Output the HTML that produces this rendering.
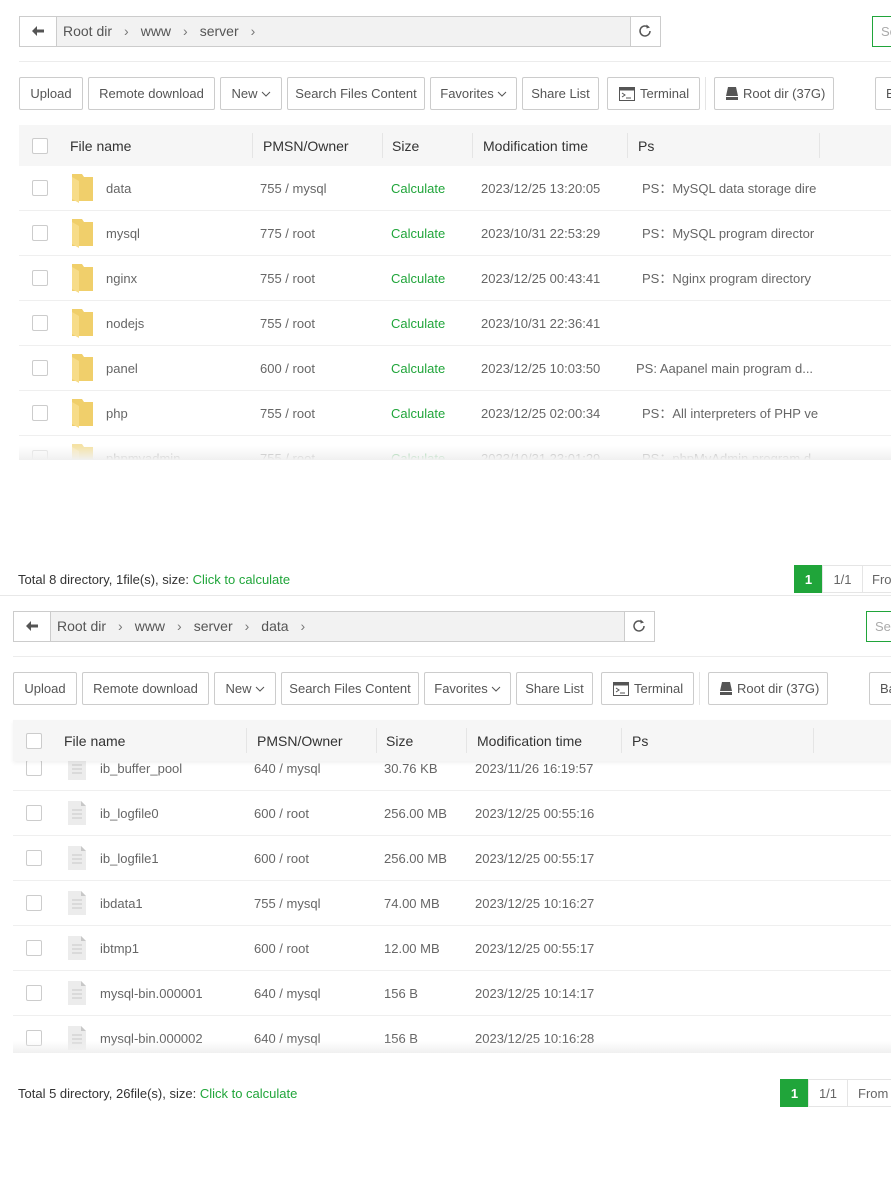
<!DOCTYPE html>
<html><head><meta charset="utf-8">
<style>
*{box-sizing:border-box;margin:0;padding:0}
body{width:891px;height:1131px;overflow:hidden;background:#fff;font-family:"Liberation Sans","Noto Sans CJK SC",sans-serif;color:#333;position:relative}
.p{position:absolute;left:0;width:900px;height:595px}
.a{position:absolute}
.bc{position:absolute;top:16px;height:31px;border:1px solid #ccc;background:#f2f2f2}
.btn{position:absolute;top:77px;height:33px;border:1px solid #ccc;border-radius:2px;background:#fff;font-size:13px;color:#555;line-height:31px;text-align:center;white-space:nowrap}
.hdr{position:absolute;top:125px;height:41px;background:#f6f6f6;font-size:14px;color:#333;line-height:43px}
.cb{position:absolute;width:16px;height:16px;border:1px solid #ccc;border-radius:2px;background:#fff}
.row{position:absolute;left:0;width:900px;height:45px;border-bottom:1px solid #efefef;font-size:13px;color:#666;line-height:45px;white-space:nowrap}
.row span{position:absolute}
.g{color:#20a53a}
.vd{position:absolute;top:8px;width:1px;height:25px;background:#e5e5e5}
.foot{position:absolute;font-size:13px;color:#333}
.pg{position:absolute;height:28px;font-size:13px;line-height:28px;text-align:center;border:1px solid #e5e5e5;color:#666;background:#fff}
.cv{vertical-align:1px;margin-left:3px}
</style></head><body>

<!-- PANEL 1 -->
<div class="p" style="top:0;left:0">
  <div class="bc" style="left:19px;width:642px"></div>
  <div class="a" style="left:19px;top:16px;width:38px;height:31px;border:1px solid #ccc;background:#fff"></div>
  <svg class="a" style="left:31px;top:25px" width="14" height="12" viewBox="0 0 14 12"><path d="M6 1 1 6l5 5V7.5h7v-3H6z" fill="#555"/></svg>
  <div class="a" style="left:63px;top:16px;line-height:31px;font-size:14px;color:#555">Root dir<span style="padding:0 12px;color:#777">›</span>www<span style="padding:0 12px;color:#777">›</span>server<span style="padding:0 12px;color:#777">›</span></div>
  <div class="a" style="left:630px;top:16px;width:31px;height:31px;border:1px solid #ccc;background:#fff"></div>
  <svg class="a" style="left:637px;top:23px" width="16" height="16" viewBox="0 0 16 16"><path d="M13 8a5 5 0 1 1-1.6-3.7" fill="none" stroke="#555" stroke-width="1.5"/><path d="M9.5 1.5 13 4.5 9.5 5.5z" fill="#555"/></svg>
  <div class="a" style="left:872px;top:16px;width:30px;height:31px;border:1px solid #20a53a;font-size:13px;color:#aaa;line-height:29px;padding-left:8px">Se</div>
  <div class="a" style="left:19px;top:61px;width:880px;height:1px;background:#ececec"></div>

  <div class="btn" style="left:19px;width:64px">Upload</div>
  <div class="btn" style="left:88px;width:127px">Remote download</div>
  <div class="btn" style="left:220px;width:62px">New<svg class="cv" width="10" height="6" viewBox="0 0 10 6"><path d="M1 1l4 4 4-4" fill="none" stroke="#555"/></svg></div>
  <div class="btn" style="left:287px;width:138px">Search Files Content</div>
  <div class="btn" style="left:430px;width:87px">Favorites<svg class="cv" width="10" height="6" viewBox="0 0 10 6"><path d="M1 1l4 4 4-4" fill="none" stroke="#555"/></svg></div>
  <div class="btn" style="left:522px;width:77px">Share List</div>
  <div class="btn" style="left:607px;width:93px;text-align:left;padding-left:11px"><svg style="vertical-align:-3px;margin-right:5px" width="16" height="14" viewBox="0 0 16 14"><rect x=".5" y=".5" width="15" height="13" fill="#fff" stroke="#555"/><rect x=".5" y=".5" width="15" height="3" fill="#555"/><path d="M3 6l3 2-3 2M7 11h5" fill="none" stroke="#555"/></svg>Terminal</div>
  <div class="a" style="left:705px;top:77px;width:1px;height:33px;background:#e5e5e5"></div>
  <div class="btn" style="left:714px;width:120px;text-align:left;padding-left:11px"><svg style="vertical-align:-2px;margin-right:5px" width="12" height="13" viewBox="0 0 12 13"><path d="M2 0h8l2 9H0z" fill="#555"/><rect x="0" y="10" width="12" height="3" fill="#555"/></svg>Root dir (37G)</div>
  <div class="btn" style="left:875px;width:30px;text-align:left;padding-left:10px">B</div>

  <div class="hdr" style="left:19px;width:880px">
    <div class="cb" style="left:13px;top:13px"></div>
    <span class="a" style="left:51px">File name</span>
    <div class="vd" style="left:233px"></div><span class="a" style="left:244px">PMSN/Owner</span>
    <div class="vd" style="left:363px"></div><span class="a" style="left:373px">Size</span>
    <div class="vd" style="left:453px"></div><span class="a" style="left:464px">Modification time</span>
    <div class="vd" style="left:608px"></div><span class="a" style="left:619px">Ps</span>
    <div class="vd" style="left:800px"></div>
  </div>

  <div class="a" style="left:19px;top:166px;width:880px;height:294px;overflow:hidden">
    <div class="row" style="top:0"><div class="cb" style="left:13px;top:14px"></div><svg class="a" style="left:53px;top:8px" width="21" height="29" viewBox="0 0 21 29"><path d="M0 0h10l2 3h9v24H0z" fill="#f0cf6b"/><path d="M0 3l7 4v22l-7-4z" fill="#f7dc88"/></svg><span style="left:87px">data</span><span style="left:241px">755 / mysql</span><span class="g" style="left:372px">Calculate</span><span style="left:462px">2023/12/25 13:20:05</span><span style="left:623px">PS：MySQL data storage dire</span></div>
    <div class="row" style="top:45px"><div class="cb" style="left:13px;top:14px"></div><svg class="a" style="left:53px;top:8px" width="21" height="29" viewBox="0 0 21 29"><path d="M0 0h10l2 3h9v24H0z" fill="#f0cf6b"/><path d="M0 3l7 4v22l-7-4z" fill="#f7dc88"/></svg><span style="left:87px">mysql</span><span style="left:241px">775 / root</span><span class="g" style="left:372px">Calculate</span><span style="left:462px">2023/10/31 22:53:29</span><span style="left:623px">PS：MySQL program director</span></div>
    <div class="row" style="top:90px"><div class="cb" style="left:13px;top:14px"></div><svg class="a" style="left:53px;top:8px" width="21" height="29" viewBox="0 0 21 29"><path d="M0 0h10l2 3h9v24H0z" fill="#f0cf6b"/><path d="M0 3l7 4v22l-7-4z" fill="#f7dc88"/></svg><span style="left:87px">nginx</span><span style="left:241px">755 / root</span><span class="g" style="left:372px">Calculate</span><span style="left:462px">2023/12/25 00:43:41</span><span style="left:623px">PS：Nginx program directory</span></div>
    <div class="row" style="top:135px"><div class="cb" style="left:13px;top:14px"></div><svg class="a" style="left:53px;top:8px" width="21" height="29" viewBox="0 0 21 29"><path d="M0 0h10l2 3h9v24H0z" fill="#f0cf6b"/><path d="M0 3l7 4v22l-7-4z" fill="#f7dc88"/></svg><span style="left:87px">nodejs</span><span style="left:241px">755 / root</span><span class="g" style="left:372px">Calculate</span><span style="left:462px">2023/10/31 22:36:41</span></div>
    <div class="row" style="top:180px"><div class="cb" style="left:13px;top:14px"></div><svg class="a" style="left:53px;top:8px" width="21" height="29" viewBox="0 0 21 29"><path d="M0 0h10l2 3h9v24H0z" fill="#f0cf6b"/><path d="M0 3l7 4v22l-7-4z" fill="#f7dc88"/></svg><span style="left:87px">panel</span><span style="left:241px">600 / root</span><span class="g" style="left:372px">Calculate</span><span style="left:462px">2023/12/25 10:03:50</span><span style="left:617px">PS: Aapanel main program d...</span></div>
    <div class="row" style="top:225px"><div class="cb" style="left:13px;top:14px"></div><svg class="a" style="left:53px;top:8px" width="21" height="29" viewBox="0 0 21 29"><path d="M0 0h10l2 3h9v24H0z" fill="#f0cf6b"/><path d="M0 3l7 4v22l-7-4z" fill="#f7dc88"/></svg><span style="left:87px">php</span><span style="left:241px">755 / root</span><span class="g" style="left:372px">Calculate</span><span style="left:462px">2023/12/25 02:00:34</span><span style="left:623px">PS：All interpreters of PHP ve</span></div>
    <div class="row" style="top:270px;opacity:.6"><div class="cb" style="left:13px;top:14px"></div><svg class="a" style="left:53px;top:8px" width="21" height="29" viewBox="0 0 21 29"><path d="M0 0h10l2 3h9v24H0z" fill="#f0cf6b"/><path d="M0 3l7 4v22l-7-4z" fill="#f7dc88"/></svg><span style="left:87px">phpmyadmin</span><span style="left:241px">755 / root</span><span class="g" style="left:372px">Calculate</span><span style="left:462px">2023/10/31 23:01:29</span><span style="left:623px">PS：phpMyAdmin program d</span></div>
    <div class="a" style="left:0;top:280px;width:880px;height:14px;background:linear-gradient(rgba(255,255,255,0),#f0f0f0)"></div>
  </div>

  <div class="foot" style="left:18px;top:572px">Total 8 directory, 1file(s), size: <span class="g">Click to calculate</span></div>
  <div class="pg" style="left:794px;top:565px;width:29px;background:#20a53a;border-color:#20a53a;color:#fff;font-weight:bold">1</div>
  <div class="pg" style="left:822px;top:565px;width:41px">1/1</div>
  <div class="pg" style="left:862px;top:565px;width:40px;text-align:left;padding-left:9px">From</div>
  <div class="a" style="left:0;top:595px;width:891px;height:1px;background:#e8e8e8"></div>
</div>

<!-- PANEL 2 -->
<div class="p" style="top:595px;left:-6px">
  <div class="bc" style="left:19px;width:642px"></div>
  <div class="a" style="left:19px;top:16px;width:38px;height:31px;border:1px solid #ccc;background:#fff"></div>
  <svg class="a" style="left:31px;top:25px" width="14" height="12" viewBox="0 0 14 12"><path d="M6 1 1 6l5 5V7.5h7v-3H6z" fill="#555"/></svg>
  <div class="a" style="left:63px;top:16px;line-height:31px;font-size:14px;color:#555">Root dir<span style="padding:0 12px;color:#777">›</span>www<span style="padding:0 12px;color:#777">›</span>server<span style="padding:0 12px;color:#777">›</span>data<span style="padding:0 12px;color:#777">›</span></div>
  <div class="a" style="left:630px;top:16px;width:31px;height:31px;border:1px solid #ccc;background:#fff"></div>
  <svg class="a" style="left:637px;top:23px" width="16" height="16" viewBox="0 0 16 16"><path d="M13 8a5 5 0 1 1-1.6-3.7" fill="none" stroke="#555" stroke-width="1.5"/><path d="M9.5 1.5 13 4.5 9.5 5.5z" fill="#555"/></svg>
  <div class="a" style="left:872px;top:16px;width:40px;height:31px;border:1px solid #20a53a;font-size:13px;color:#aaa;line-height:29px;padding-left:8px">Sea</div>
  <div class="a" style="left:19px;top:61px;width:890px;height:1px;background:#ececec"></div>

  <div class="btn" style="left:19px;width:64px">Upload</div>
  <div class="btn" style="left:88px;width:127px">Remote download</div>
  <div class="btn" style="left:220px;width:62px">New<svg class="cv" width="10" height="6" viewBox="0 0 10 6"><path d="M1 1l4 4 4-4" fill="none" stroke="#555"/></svg></div>
  <div class="btn" style="left:287px;width:138px">Search Files Content</div>
  <div class="btn" style="left:430px;width:87px">Favorites<svg class="cv" width="10" height="6" viewBox="0 0 10 6"><path d="M1 1l4 4 4-4" fill="none" stroke="#555"/></svg></div>
  <div class="btn" style="left:522px;width:77px">Share List</div>
  <div class="btn" style="left:607px;width:93px;text-align:left;padding-left:11px"><svg style="vertical-align:-3px;margin-right:5px" width="16" height="14" viewBox="0 0 16 14"><rect x=".5" y=".5" width="15" height="13" fill="#fff" stroke="#555"/><rect x=".5" y=".5" width="15" height="3" fill="#555"/><path d="M3 6l3 2-3 2M7 11h5" fill="none" stroke="#555"/></svg>Terminal</div>
  <div class="a" style="left:705px;top:77px;width:1px;height:33px;background:#e5e5e5"></div>
  <div class="btn" style="left:714px;width:120px;text-align:left;padding-left:11px"><svg style="vertical-align:-2px;margin-right:5px" width="12" height="13" viewBox="0 0 12 13"><path d="M2 0h8l2 9H0z" fill="#555"/><rect x="0" y="10" width="12" height="3" fill="#555"/></svg>Root dir (37G)</div>
  <div class="btn" style="left:875px;width:40px;text-align:left;padding-left:10px">Ba</div>

  <div class="a" style="left:19px;top:166px;width:890px;height:292px;overflow:hidden">
    <div class="row" style="top:-15px"><div class="cb" style="left:13px;top:14px"></div><svg class="a" style="left:55px;top:10px" width="18" height="24" viewBox="0 0 18 24"><path d="M0 0h13l5 5v19H0z" fill="#ececec"/><path d="M4 9h10M4 13h10M4 17h10" stroke="#d4d4d4" stroke-width="1.5"/></svg><span style="left:87px">ib_buffer_pool</span><span style="left:241px">640 / mysql</span><span style="left:371px">30.76 KB</span><span style="left:462px">2023/11/26 16:19:57</span></div>
    <div class="row" style="top:30px"><div class="cb" style="left:13px;top:14px"></div><svg class="a" style="left:55px;top:10px" width="18" height="24" viewBox="0 0 18 24"><path d="M0 0h13l5 5v19H0z" fill="#ececec"/><path d="M13 0v5h5z" fill="#c8c8c8"/><path d="M4 9h10M4 13h10M4 17h10" stroke="#d4d4d4" stroke-width="1.5"/></svg><span style="left:87px">ib_logfile0</span><span style="left:241px">600 / root</span><span style="left:371px">256.00 MB</span><span style="left:462px">2023/12/25 00:55:16</span></div>
    <div class="row" style="top:75px"><div class="cb" style="left:13px;top:14px"></div><svg class="a" style="left:55px;top:10px" width="18" height="24" viewBox="0 0 18 24"><path d="M0 0h13l5 5v19H0z" fill="#ececec"/><path d="M13 0v5h5z" fill="#c8c8c8"/><path d="M4 9h10M4 13h10M4 17h10" stroke="#d4d4d4" stroke-width="1.5"/></svg><span style="left:87px">ib_logfile1</span><span style="left:241px">600 / root</span><span style="left:371px">256.00 MB</span><span style="left:462px">2023/12/25 00:55:17</span></div>
    <div class="row" style="top:120px"><div class="cb" style="left:13px;top:14px"></div><svg class="a" style="left:55px;top:10px" width="18" height="24" viewBox="0 0 18 24"><path d="M0 0h13l5 5v19H0z" fill="#ececec"/><path d="M13 0v5h5z" fill="#c8c8c8"/><path d="M4 9h10M4 13h10M4 17h10" stroke="#d4d4d4" stroke-width="1.5"/></svg><span style="left:87px">ibdata1</span><span style="left:241px">755 / mysql</span><span style="left:371px">74.00 MB</span><span style="left:462px">2023/12/25 10:16:27</span></div>
    <div class="row" style="top:165px"><div class="cb" style="left:13px;top:14px"></div><svg class="a" style="left:55px;top:10px" width="18" height="24" viewBox="0 0 18 24"><path d="M0 0h13l5 5v19H0z" fill="#ececec"/><path d="M13 0v5h5z" fill="#c8c8c8"/><path d="M4 9h10M4 13h10M4 17h10" stroke="#d4d4d4" stroke-width="1.5"/></svg><span style="left:87px">ibtmp1</span><span style="left:241px">600 / root</span><span style="left:371px">12.00 MB</span><span style="left:462px">2023/12/25 00:55:17</span></div>
    <div class="row" style="top:210px"><div class="cb" style="left:13px;top:14px"></div><svg class="a" style="left:55px;top:10px" width="18" height="24" viewBox="0 0 18 24"><path d="M0 0h13l5 5v19H0z" fill="#ececec"/><path d="M13 0v5h5z" fill="#c8c8c8"/><path d="M4 9h10M4 13h10M4 17h10" stroke="#d4d4d4" stroke-width="1.5"/></svg><span style="left:87px">mysql-bin.000001</span><span style="left:241px">640 / mysql</span><span style="left:371px">156 B</span><span style="left:462px">2023/12/25 10:14:17</span></div>
    <div class="row" style="top:255px"><div class="cb" style="left:13px;top:14px"></div><svg class="a" style="left:55px;top:10px" width="18" height="24" viewBox="0 0 18 24"><path d="M0 0h13l5 5v19H0z" fill="#ececec"/><path d="M13 0v5h5z" fill="#c8c8c8"/><path d="M4 9h10M4 13h10M4 17h10" stroke="#d4d4d4" stroke-width="1.5"/></svg><span style="left:87px">mysql-bin.000002</span><span style="left:241px">640 / mysql</span><span style="left:371px">156 B</span><span style="left:462px">2023/12/25 10:16:28</span></div>
    <div class="a" style="left:0;top:280px;width:890px;height:12px;background:linear-gradient(rgba(255,255,255,0),#f0f0f0)"></div>
  </div>

  <div class="hdr" style="left:19px;width:890px;box-shadow:0 2px 4px rgba(0,0,0,.06)">
    <div class="cb" style="left:13px;top:13px"></div>
    <span class="a" style="left:51px">File name</span>
    <div class="vd" style="left:233px"></div><span class="a" style="left:244px">PMSN/Owner</span>
    <div class="vd" style="left:363px"></div><span class="a" style="left:373px">Size</span>
    <div class="vd" style="left:453px"></div><span class="a" style="left:464px">Modification time</span>
    <div class="vd" style="left:608px"></div><span class="a" style="left:619px">Ps</span>
    <div class="vd" style="left:800px"></div>
  </div>

  <div class="foot" style="left:24px;top:491px">Total 5 directory, 26file(s), size: <span class="g">Click to calculate</span></div>
  <div class="pg" style="left:786px;top:484px;width:29px;background:#20a53a;border-color:#20a53a;color:#fff;font-weight:bold">1</div>
  <div class="pg" style="left:814px;top:484px;width:40px">1/1</div>
  <div class="pg" style="left:853px;top:484px;width:50px;text-align:left;padding-left:10px">From</div>
</div>
</body></html>
